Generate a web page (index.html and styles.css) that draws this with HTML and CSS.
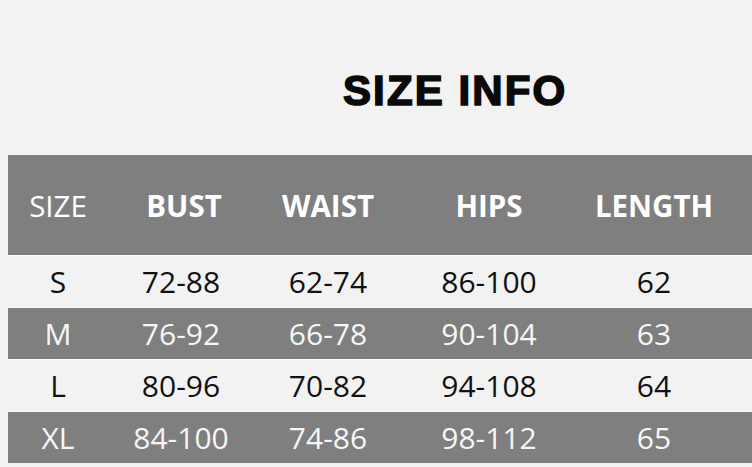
FILE: index.html
```html
<!DOCTYPE html>
<html>
<head>
<meta charset="utf-8">
<link rel="stylesheet" href="styles.css">
</head>
<body>
<div class="page">
  <h1 class="title">SIZE INFO</h1>
  <div class="table">
    <div class="row head">
      <div class="cell reg">SIZE</div>
      <div class="cell">BUST</div>
      <div class="cell">WAIST</div>
      <div class="cell">HIPS</div>
      <div class="cell">LENGTH</div>
      <div class="cell"></div>
    </div>
    <div class="row light">
      <div class="cell">S</div>
      <div class="cell bust">72-88</div>
      <div class="cell">62-74</div>
      <div class="cell">86-100</div>
      <div class="cell">62</div>
      <div class="cell"></div>
    </div>
    <div class="row dark">
      <div class="cell">M</div>
      <div class="cell bust">76-92</div>
      <div class="cell">66-78</div>
      <div class="cell">90-104</div>
      <div class="cell">63</div>
      <div class="cell"></div>
    </div>
    <div class="row light">
      <div class="cell">L</div>
      <div class="cell bust">80-96</div>
      <div class="cell">70-82</div>
      <div class="cell">94-108</div>
      <div class="cell">64</div>
      <div class="cell"></div>
    </div>
    <div class="row dark">
      <div class="cell">XL</div>
      <div class="cell bust">84-100</div>
      <div class="cell">74-86</div>
      <div class="cell">98-112</div>
      <div class="cell">65</div>
      <div class="cell"></div>
    </div>
  </div>
</div>
</body>
</html>
```

FILE: styles.css
```css
html, body {
  margin: 0;
  padding: 0;
  background: #f2f2f2;
}
.page {
  width: 752px;
  height: 467px;
  overflow: hidden;
  padding-left: 8px;
  box-sizing: border-box;
}
.title {
  margin: 0;
  padding-top: 65px;
  height: 155px;
  box-sizing: border-box;
  padding-left: 335px;
  font-family: "Liberation Sans", Arial, sans-serif;
  font-weight: 700;
  font-size: 42px;
  line-height: 52px;
  letter-spacing: 2.1px;
  color: #0a0a0a;
  -webkit-text-stroke: 1.6px #0a0a0a;
  white-space: nowrap;
}
.table {
  display: flex;
  flex-direction: column;
  gap: 1px;
  background: #fbfbfb;
  width: 760px;
}
.row {
  display: grid;
  grid-template-columns: 100px 152px 136px 186px 144px 1fr;
  height: 51px;
  align-items: center;
  font-family: "Open Sans", "Noto Sans", sans-serif;
  font-size: 30px;
}
.cell {
  text-align: center;
  white-space: nowrap;
}
.cell.bust {
  padding-right: 6px;
}
.head {
  height: 100px;
  background: #7f7f7f;
  color: #ffffff;
  font-weight: 700;
  font-size: 29.5px;
}
.head .reg {
  font-weight: 400;
}
.light {
  background: #f2f2f2;
  color: #111111;
}
.dark {
  background: #7f7f7f;
  color: #f6f6f6;
}
```
